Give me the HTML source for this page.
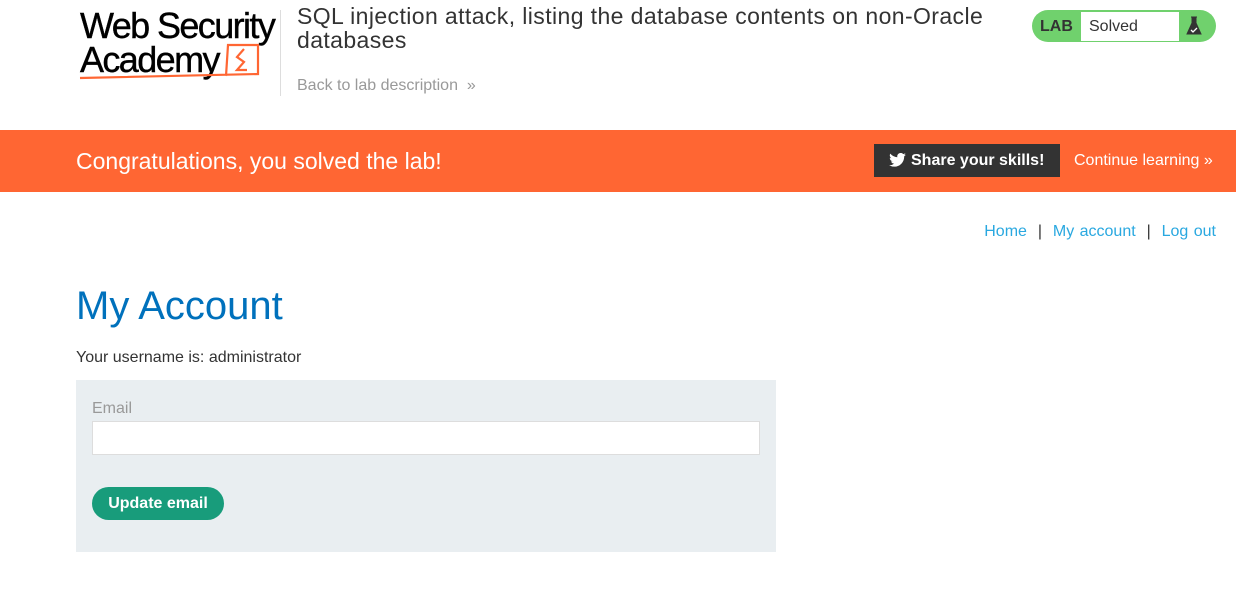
<!DOCTYPE html>
<html><head><meta charset="utf-8"><style>
body{margin:0;width:1236px;height:609px;background:#fff;font-family:"Liberation Sans",sans-serif;position:relative;overflow:hidden}
.a{position:absolute}
a{color:#29a8e0;text-decoration:none}
</style></head><body>
<div class="a" style="left:80px;top:9px;font-size:36px;letter-spacing:-1.6px;line-height:34px;color:#000;-webkit-text-stroke:0.4px #000">Web Security<br>Academy</div>
<svg class="a" style="left:76px;top:40px" width="190" height="42"><path d="M150 36 L152 5 L182 5 L182 34 L4 38" stroke="#ff6633" stroke-width="2.2" fill="none"/><path d="M168 9 L161 17 L168 22 L161 30 L171 30" stroke="#ff6633" stroke-width="2.2" fill="none"/></svg>
<div class="a" style="left:280px;top:10px;width:1px;height:86px;background:#ddd"></div>
<div class="a" style="left:297px;top:4px;font-size:23px;letter-spacing:0.4px;line-height:24px;color:#333;width:720px">SQL injection attack, listing the database contents on non-Oracle databases</div>
<div class="a" style="left:297px;top:77px;font-size:16px;color:#999">Back to lab description &nbsp;»</div>
<div class="a" style="left:1032px;top:10px;width:184px;height:32px;background:#70d16d;border-radius:16px"></div>
<div class="a" style="left:1040px;top:18px;font-size:16px;font-weight:bold;color:#333">LAB</div>
<div class="a" style="left:1081px;top:12px;width:98px;height:29px;background:#fff;font-size:16px;color:#333;line-height:29px;text-indent:8px">Solved</div>
<svg class="a" style="left:1185px;top:15px" width="18" height="22"><path d="M6 2h6M7 2v6L2 19h14L11 8V2" fill="#333" stroke="#333"/><path d="M6 15l2 2 4-4" stroke="#fff" fill="none" stroke-width="1.3"/></svg>
<div class="a" style="left:0;top:130px;width:1236px;height:62px;background:#ff6633"></div>
<div class="a" style="left:76px;top:148px;font-size:23px;color:#fff">Congratulations, you solved the lab!</div>
<div class="a" style="left:874px;top:144px;width:186px;height:33px;background:#333"></div>
<svg class="a" style="left:889px;top:153px" width="17" height="14" viewBox="0 0 24 20"><path d="M24 2.4a10 10 0 0 1-2.8.8A5 5 0 0 0 23.3.4a10 10 0 0 1-3.1 1.2A4.9 4.9 0 0 0 11.8 6 14 14 0 0 1 1.7.9a4.9 4.9 0 0 0 1.5 6.6A4.9 4.9 0 0 1 1 6.9a4.9 4.9 0 0 0 3.9 4.8 5 5 0 0 1-2.2.1 4.9 4.9 0 0 0 4.6 3.4A9.9 9.9 0 0 1 0 17.3 14 14 0 0 0 7.5 19.5c9.1 0 14-7.5 14-14v-.6A10 10 0 0 0 24 2.4z" fill="#fff"/></svg>
<div class="a" style="left:911px;top:152px;color:#fff;font-weight:bold;font-size:16px">Share your skills!</div>
<div class="a" style="left:1074px;top:152px;font-size:16px;color:#fff">Continue learning »</div>
<div class="a" style="right:20px;top:223px;font-size:16px;color:#333;word-spacing:1px"><a>Home</a> &nbsp;| &nbsp;<a>My account</a> &nbsp;| &nbsp;<a>Log out</a></div>
<div class="a" style="left:76px;top:284px;font-size:40px;color:#0071bc">My Account</div>
<div class="a" style="left:76px;top:349px;font-size:16px;color:#333">Your username is: administrator</div>
<div class="a" style="left:76px;top:380px;width:700px;height:172px;background:#e9eef1"></div>
<div class="a" style="left:92px;top:400px;font-size:16px;color:#999">Email</div>
<div class="a" style="left:92px;top:421px;width:666px;height:32px;background:#fff;border:1px solid #ddd"></div>
<div class="a" style="left:92px;top:487px;width:132px;height:33px;background:#189c7b;border-radius:17px;color:#fff;font-weight:bold;font-size:16px;line-height:33px;text-align:center">Update email</div>
</body></html>
